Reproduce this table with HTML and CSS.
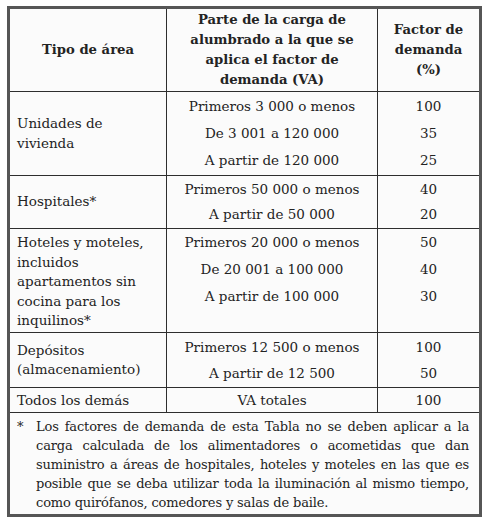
FILE: index.html
```html
<!DOCTYPE html>
<html lang="es">
<head>
  <meta charset="UTF-8">
  <title>Factores de demanda para cargas de alumbrado</title>
  <meta name="viewport" content="width=device-width, initial-scale=1">
  <link rel="stylesheet" href="styles.css">
</head>
<body>
  <table class="demand-table">
    <colgroup>
      <col class="col-area">
      <col class="col-load">
      <col class="col-factor">
    </colgroup>
    <thead>
      <tr class="head">
        <th>Tipo de área</th>
        <th>Parte de la carga de<br>alumbrado a la que se<br>aplica el factor de<br>demanda (VA)</th>
        <th>Factor de<br>demanda<br>(%)</th>
      </tr>
    </thead>
    <tbody>
      <tr class="group">
        <td class="area">Unidades de<br>vivienda</td>
        <td class="load">
          <div>Primeros 3 000 o menos</div>
          <div>De 3 001 a 120 000</div>
          <div>A partir de 120 000</div>
        </td>
        <td class="factor">
          <div>100</div>
          <div>35</div>
          <div>25</div>
        </td>
      </tr>
      <tr class="group tight">
        <td class="area">Hospitales*</td>
        <td class="load">
          <div>Primeros 50 000 o menos</div>
          <div>A partir de 50 000</div>
        </td>
        <td class="factor">
          <div>40</div>
          <div>20</div>
        </td>
      </tr>
      <tr class="group top">
        <td class="area">Hoteles y moteles,<br>incluidos<br>apartamentos sin<br>cocina para los<br>inquilinos*</td>
        <td class="load">
          <div>Primeros 20 000 o menos</div>
          <div>De 20 001 a 100 000</div>
          <div>A partir de 100 000</div>
        </td>
        <td class="factor">
          <div>50</div>
          <div>40</div>
          <div>30</div>
        </td>
      </tr>
      <tr class="group storage">
        <td class="area">Depósitos<br>(almacenamiento)</td>
        <td class="load">
          <div>Primeros 12 500 o menos</div>
          <div>A partir de 12 500</div>
        </td>
        <td class="factor">
          <div>100</div>
          <div>50</div>
        </td>
      </tr>
      <tr class="single">
        <td class="area">Todos los demás</td>
        <td class="load">VA totales</td>
        <td class="factor">100</td>
      </tr>
      <tr class="note">
        <td colspan="3">
          <div class="note-body">
            <span class="mark">*</span>
            <p>Los factores de demanda de esta Tabla no se deben aplicar a la carga calculada de los alimentadores o acometidas que dan suministro a áreas de hospitales, hoteles y moteles en las que es posible que se deba utilizar toda la iluminación al mismo tiempo, como quirófanos, comedores y salas de baile.</p>
          </div>
        </td>
      </tr>
    </tbody>
  </table>
</body>
</html>
```

FILE: styles.css
```css
body {
  margin: 0;
  background: #ffffff;
  font-family: "DejaVu Serif", serif;
  font-size: 13.5px;
  color: #232323;
}
.demand-table {
  margin: 6px 0 0 7px;
  width: 475px;
  border-collapse: collapse;
  border: 3px solid #565656;
  background: #fbfbfb;
  table-layout: fixed;
  font-size: 13.5px;
}
.col-area {
  width: 158px;
}
.col-load {
  width: 211px;
}
.demand-table th,
.demand-table td {
  border: 1px solid #2e2e2e;
  padding: 0;
  vertical-align: middle;
}
.head th {
  height: 82px;
  font-size: 13.2px;
  font-weight: bold;
  line-height: 20px;
  text-align: center;
}
.area {
  padding: 0 0 0 7px !important;
  line-height: 19.5px;
  text-align: left;
}
.load,
.factor {
  text-align: center;
}
.group {
  height: 84px;
}
.group .load div,
.group .factor div {
  line-height: 27px;
}
.group.tight {
  height: 53px;
}
.group.tight .load div,
.group.tight .factor div {
  line-height: 25px;
}
.group.top {
  height: 104px;
}
.group.top td {
  vertical-align: top;
}
.group.top .area {
  padding-top: 4px !important;
}
.group.storage {
  height: 55px;
}
.group.storage .load div,
.group.storage .factor div {
  line-height: 26px;
}
.single td {
  height: 24px;
  line-height: 24px;
}
.note td {
  padding: 4px 10px 2px 6px;
}
.note-body {
  display: flex;
  font-size: 13px;
  letter-spacing: -0.15px;
  line-height: 19px;
}
.mark {
  width: 19px;
  flex-shrink: 0;
  padding-left: 1px;
}
.note-body p {
  margin: 0;
  text-align: justify;
}
```
